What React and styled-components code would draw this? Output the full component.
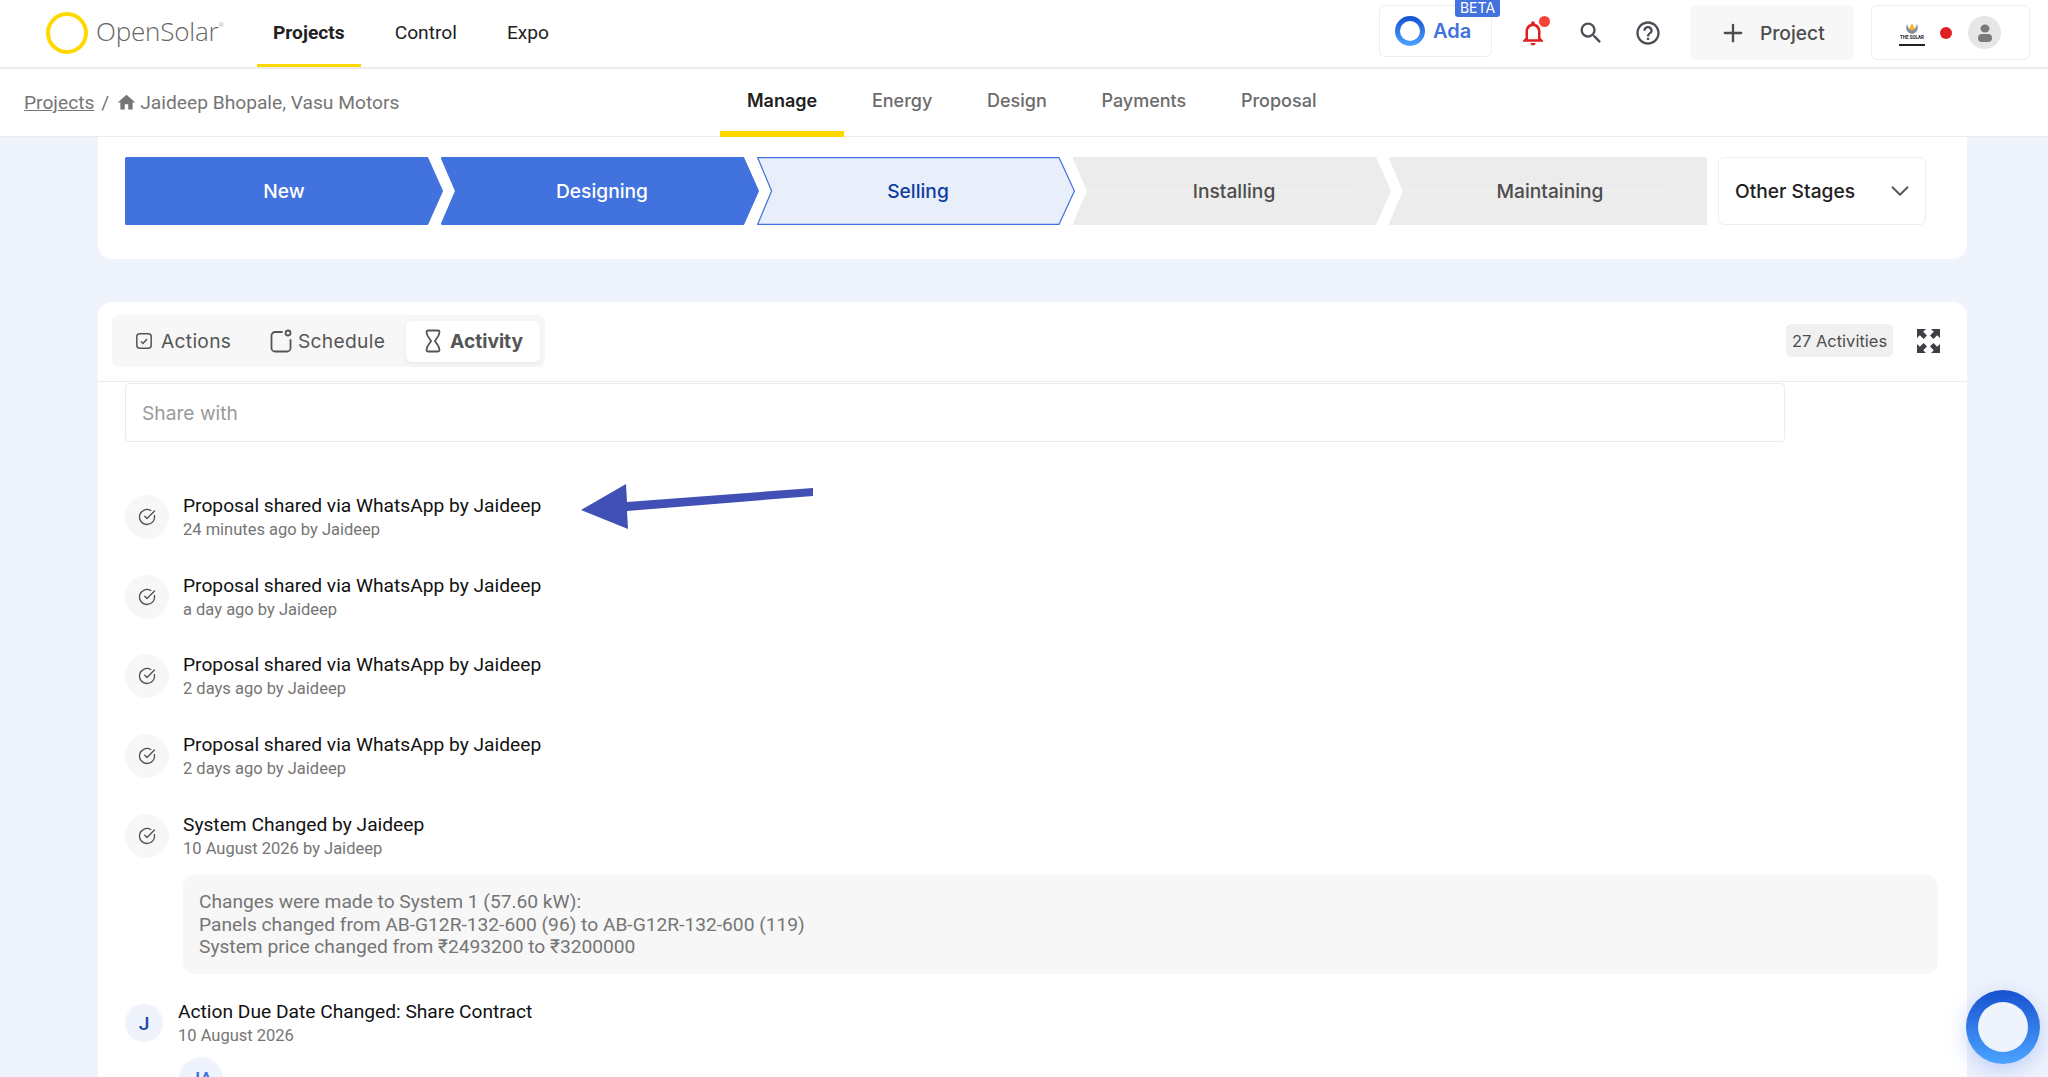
import React from 'react';
import styled, {createGlobalStyle} from 'styled-components';
import {CircleCheckBig, Plus, ChevronDown} from 'lucide-react';
import {MdHome, MdOutlineNotifications, MdOutlineHelpOutline, MdSearch} from 'react-icons/md';

const GlobalStyle = createGlobalStyle`
  html, body {
    margin: 0;
    height: 100%;
    overflow: hidden;
    background: #eff3fc;
    font-family: Roboto, "Liberation Sans", sans-serif;
  }
  * {
    box-sizing: border-box;
  }
`;

const Page = styled.div`
  height: 1077px;
  overflow: hidden;
  display: flex;
  flex-direction: column;
`;

const TopBar = styled.header`
  height: 69px;
  flex: none;
  background: #fff;
  border-bottom: 2px solid #ececec;
  display: flex;
  align-items: flex-start;
  padding-left: 46px;
`;

const Logo = styled.div`
  display: flex;
  align-items: center;
  gap: 8px;
  height: 66px;
  width: 211px;
`;

const LogoRing = styled.div`
  width: 42px;
  height: 42px;
  border-radius: 50%;
  border: 4px solid #ffd800;
`;

const LogoName = styled.span`
  font-family: "Open Sans", sans-serif;
  font-weight: 300;
  font-size: 26px;
  letter-spacing: -0.2px;
  color: #666;
  padding-bottom: 4px;
  sup {
    font-size: 6px;
    vertical-align: 14px;
  }
`;

const MainNav = styled.nav`
  display: flex;
  height: 67px;
`;

const MainLink = styled.a`
  height: 67px;
  padding: 0 ${({$pad}) => $pad}px;
  display: flex;
  align-items: center;
  font-size: 19.2px;
  font-weight: ${({$active}) => ($active ? 700 : 400)};
  color: #212121;
  border-bottom: 3px solid ${({$active}) => ($active ? '#ffd800' : 'transparent')};
`;

const TopRight = styled.div`
  margin-left: auto;
  display: flex;
  align-items: flex-start;
  padding-right: 18px;
`;

const AdaBox = styled.div`
  position: relative;
  width: 113px;
  height: 52px;
  margin-top: 5px;
  border: 1px solid #eeeeee;
  border-radius: 6px;
  display: flex;
  align-items: center;
  gap: 8px;
  padding-left: 15px;
  color: #4272dd;
  font-family: Inter, sans-serif;
  font-weight: 600;
  font-size: 20px;
`;

const AdaRing = styled.div`
  width: 30px;
  height: 30px;
  border-radius: 50%;
  padding: 5px;
  background: linear-gradient(#1751d0, #4ba4ff);
  &::after {
    content: '';
    display: block;
    width: 100%;
    height: 100%;
    border-radius: 50%;
    background: #fff;
  }
`;

const BetaBadge = styled.span`
  position: absolute;
  top: -6px;
  right: -9px;
  width: 45px;
  height: 17px;
  border-radius: 0 0 3px 3px;
  background: #4272dd;
  color: #fff;
  font-weight: 400;
  font-size: 14px;
  line-height: 16px;
  text-align: center;
`;

const IconGroup = styled.div`
  display: flex;
  align-items: center;
  gap: 29px;
  height: 65px;
  width: 198px;
  padding-left: 26px;
  color: #4d4d55;
`;

const BellWrap = styled.div`
  position: relative;
  width: 30px;
  height: 30px;
  color: #e02020;
  svg {
    display: block;
  }
  &::after {
    content: '';
    position: absolute;
    top: -1.5px;
    right: -2px;
    width: 11px;
    height: 11px;
    border-radius: 50%;
    background: #f44336;
  }
`;

const ProjectButton = styled.div`
  width: 164px;
  height: 55px;
  margin-top: 5px;
  border-radius: 6px;
  background: #f7f7f7;
  color: #4d4d4d;
  display: flex;
  align-items: center;
  gap: 13px;
  padding-left: 29px;
  font-family: Inter, sans-serif;
  font-weight: 500;
  font-size: 19.2px;
`;

const OrgBox = styled.div`
  width: 159px;
  height: 55px;
  margin: 5px 0 0 17px;
  border: 1px solid #eeeeee;
  border-radius: 6px;
  display: flex;
  align-items: center;
  padding-left: 27px;
`;

const RedDot = styled.span`
  width: 12px;
  height: 12px;
  border-radius: 50%;
  background: #e02020;
  margin: 0 16px 0 15px;
`;

const Avatar = styled.div`
  width: 33px;
  height: 33px;
  border-radius: 50%;
  background: #e6e6e6;
  display: flex;
  align-items: center;
  justify-content: center;
`;

const SubBar = styled.div`
  height: 68px;
  flex: none;
  background: #fff;
  border-bottom: 1px solid #ececec;
  display: flex;
  align-items: flex-start;
`;

const Breadcrumb = styled.div`
  width: 720px;
  padding: 22px 0 0 24px;
  display: flex;
  align-items: center;
  font-size: 19.2px;
  color: #757575;
  a {
    text-decoration: underline;
  }
  span {
    margin: 0 7px;
  }
  svg {
    margin-right: 3px;
  }
`;

const ProjectTabs = styled.nav`
  display: flex;
  height: 68px;
`;

const ProjectTab = styled.a`
  height: 68px;
  padding: 0 27px;
  margin-right: 0.7px;
  display: flex;
  align-items: center;
  font-family: Inter, sans-serif;
  font-size: 18px;
  font-weight: ${({$active}) => ($active ? 600 : 500)};
  color: ${({$active}) => ($active ? '#212121' : '#6b6b6b')};
  border-bottom: 6px solid ${({$active}) => ($active ? '#ffd800' : 'transparent')};
`;

const Content = styled.main`
  flex: 1;
  min-height: 0;
  padding: 0 81px 0 98px;
  display: flex;
  flex-direction: column;
  gap: 43px;
`;

const StageCard = styled.section`
  flex: none;
  height: 122px;
  background: #fff;
  border-radius: 0 0 14px 14px;
  padding: 20px 27px 0;
  display: flex;
`;

const StageItem = styled.div`
  position: relative;
  flex: 0 0 318px;
  height: 68px;
  margin-left: ${({$first}) => ($first ? 0 : -2)}px;
  padding-left: ${({$first}) => ($first ? 0 : 4)}px;
  display: flex;
  align-items: center;
  justify-content: center;
  font-family: Inter, sans-serif;
  font-size: 19.2px;
  font-weight: 500;
  color: ${({$color}) => $color};
`;

const StageShape = styled.svg`
  position: absolute;
  inset: 0;
`;

const StageLabel = styled.span`
  position: relative;
`;

const OtherStages = styled.div`
  width: 208px;
  height: 68px;
  margin-left: 11px;
  border: 1px solid #eeeeee;
  border-radius: 6px;
  display: flex;
  align-items: center;
  justify-content: space-between;
  padding: 0 10px 0 16px;
  font-family: Inter, sans-serif;
  font-weight: 500;
  font-size: 19.2px;
  color: #212121;
  svg {
    color: #555;
  }
`;

const ActivityCard = styled.section`
  flex: 1;
  min-height: 0;
  background: #fff;
  border-radius: 14px 14px 0 0;
  overflow: hidden;
`;

const CardHeader = styled.div`
  height: 80px;
  border-bottom: 1px solid #ececec;
  padding: 13px 27px 0 14px;
  display: flex;
  align-items: flex-start;
  justify-content: space-between;
`;

const TabGroup = styled.div`
  width: 433px;
  height: 52px;
  background: #f7f7f7;
  border-radius: 6px;
  display: flex;
  align-items: center;
  padding-left: 24px;
`;

const TabButton = styled.div`
  display: flex;
  align-items: center;
  height: 41px;
  gap: ${({$gap}) => $gap}px;
  width: ${({$width}) => $width}px;
  padding-left: ${({$active}) => ($active ? 19 : 0)}px;
  border-radius: 6px;
  background: ${({$active}) => ($active ? '#fff' : 'transparent')};
  box-shadow: ${({$active}) => ($active ? '0 2px 5px rgba(0,0,0,0.06)' : 'none')};
  font-family: Inter, sans-serif;
  font-size: 19.2px;
  font-weight: ${({$active}) => ($active ? 700 : 400)};
  letter-spacing: ${({$active}) => ($active ? 0 : 0.3)}px;
  color: #555;
`;

const HeaderRight = styled.div`
  display: flex;
  align-items: center;
  gap: 24px;
  padding-top: 9px;
`;

const CountBadge = styled.div`
  width: 107px;
  height: 33px;
  border-radius: 5px;
  background: #f0f0f0;
  display: flex;
  align-items: center;
  justify-content: center;
  font-family: Inter, sans-serif;
  font-size: 16.5px;
  color: #4d4d4d;
`;

const ActivityBody = styled.div`
  padding: 1px 29px 0 27px;
`;

const ShareInput = styled.div`
  width: 1660px;
  height: 59px;
  border: 1px solid #ececec;
  border-radius: 4px;
  padding-left: 16px;
  display: flex;
  align-items: center;
  font-family: Inter, sans-serif;
  font-size: 19.2px;
  color: #9a9a9a;
`;

const Feed = styled.div`
  padding-top: 52.5px;
  display: flex;
  flex-direction: column;
  gap: 34.7px;
`;

const FeedRow = styled.div`
  position: relative;
  display: flex;
  align-items: center;
  gap: ${({$gap}) => $gap}px;
  height: 45px;
`;

const RowIcon = styled.div`
  flex: none;
  width: ${({$size}) => $size}px;
  height: ${({$size}) => $size}px;
  border-radius: 50%;
  background: ${({$tint}) => ($tint ? '#eff3fc' : '#f7f7f7')};
  color: ${({$tint}) => ($tint ? '#1a4aa8' : '#4d4d4d')};
  font-weight: 500;
  font-size: 19.2px;
  display: flex;
  align-items: center;
  justify-content: center;
`;

const RowText = styled.div`
  padding-top: 1px;
`;

const RowTitle = styled.div`
  font-size: 19.2px;
  line-height: 24px;
  color: #111;
`;

const RowMeta = styled.div`
  font-size: 16.5px;
  line-height: 23px;
  color: #757575;
`;

const Arrow = styled.svg`
  position: absolute;
  left: 456px;
  top: -16px;
`;

const ChangeBox = styled.div`
  margin: -17.5px 0 -8.5px 58px;
  height: 99px;
  width: 1755px;
  border-radius: 12px;
  background: #f7f7f7;
  padding: 16px 16px 0;
  font-size: 19.2px;
  line-height: 22.5px;
  color: #757575;
`;

const SubAvatar = styled(RowIcon)`
  margin: -23px 0 0 54px;
  color: #4272dd;
  align-items: flex-start;
  padding-top: 10px;
`;

const Fab = styled.div`
  position: fixed;
  left: 1966px;
  top: 990px;
  width: 74px;
  height: 74px;
  border-radius: 50%;
  padding: 12px;
  background: linear-gradient(#1751d0, #4ba4ff);
  box-shadow: 0 6px 22px rgba(60, 110, 230, 0.28);
  &::after {
    content: '';
    display: block;
    width: 100%;
    height: 100%;
    border-radius: 50%;
    background: #eff3fc;
  }
`;

const STAGES = [
  {name: 'New', fill: '#4272dd', stroke: '#4272dd', color: '#fff', weight: 3},
  {name: 'Designing', fill: '#4272dd', stroke: '#4272dd', color: '#fff', weight: 3},
  {name: 'Selling', fill: '#e9eefb', stroke: '#4272dd', color: '#0f3d9e', weight: 1.2},
  {name: 'Installing', fill: '#ececec', stroke: '#ececec', color: '#4d4d4d', weight: 3, rule: true},
  {name: 'Maintaining', fill: '#ececec', stroke: '#ececec', color: '#4d4d4d', weight: 3, rule: true},
];

const PROPOSAL_TIMES = ['24 minutes ago by Jaideep', 'a day ago by Jaideep', '2 days ago by Jaideep', '2 days ago by Jaideep'];

const ActionsIcon = () => (
  <svg width="16" height="16" viewBox="0 0 16 16" fill="none" stroke="#555">
    <rect x="0.8" y="0.8" width="14.4" height="14.4" rx="3" strokeWidth="1.5"/>
    <path d="M5 8.5l2 2 4-4.5" strokeWidth="1.5"/>
  </svg>
);

const ScheduleIcon = () => (
  <svg width="22" height="24" viewBox="0 0 22 24" fill="none" stroke="#555" strokeWidth="1.8">
    <path d="M12 3H5a3.5 3.5 0 0 0-3.5 3.5V19A3.5 3.5 0 0 0 5 22.5h12a3.5 3.5 0 0 0 3.5-3.5V11" strokeLinecap="round"/>
    <circle cx="18" cy="4" r="2.5"/>
  </svg>
);

const HourglassIcon = () => (
  <svg width="16" height="24" viewBox="0 0 16 24" fill="none" stroke="#555" strokeWidth="1.8">
    <path d="M3 1.5h10A1.5 1.5 0 0 1 14.5 3c0 4-3 6-4.5 9 1.5 3 4.5 5 4.5 9a1.5 1.5 0 0 1-1.5 1.5H3A1.5 1.5 0 0 1 1.5 21c0-4 3-6 4.5-9C4.5 9 1.5 7 1.5 3A1.5 1.5 0 0 1 3 1.5z"/>
  </svg>
);

const ExpandIcon = () => (
  <svg width="23" height="24" viewBox="0 0 23 24" fill="#3f3f46">
    <path d="M0 0h9L6.2 2.8 10 6.6 6.6 10 2.8 6.2 0 9z"/>
    <path d="M23 0h-9l2.8 2.8L13 6.6 16.4 10l3.8-3.8L23 9z"/>
    <path d="M0 24h9l-2.8-2.8L10 17.400 6.6 14l-3.8 3.800L0 15z"/>
    <path d="M23 24h-9l2.8-2.800-3.800-3.800L16.400 14l3.800 3.800L23 15z"/>
  </svg>
);

const OrgLogo = () => (
  <svg width="26" height="26" viewBox="0 0 26 26">
    <path d="M10 9l3-6 3 6-3 4z" fill="#f5b82e"/>
    <path d="M8 4c-2 5 0 9 5 10 5-1 7-5 5-10-1 3-2 6-5 6s-4-3-5-6z" fill="#8a8f99"/>
    <text x="13" y="19" textAnchor="middle" fontSize="4.5" fontWeight="700" fill="#222" fontFamily="Roboto">THE SOLAR</text>
    <rect x="0" y="24" width="26" height="2" fill="#222"/>
  </svg>
);

const PersonIcon = () => (
  <svg width="16" height="18" viewBox="0 0 16 18" fill="#7a7a7a">
    <ellipse cx="8" cy="4.5" rx="4.5" ry="4"/>
    <rect x="1" y="10" width="14" height="8" rx="4"/>
  </svg>
);

// first stage has no notch on the left, last one no point on the right
const StagePolygon = ({first, last, stage}) => {
  const a = stage.weight / 2;
  const right = last
    ? `${318 - a},${a} ${318 - a},${68 - a}`
    : `302,${a} ${318 - a},34 302,${68 - a}`;
  const left = first ? '' : `${14 + a},34`;
  return (
    <StageShape width="318" height="68" viewBox="0 0 318 68">
      <polygon
        points={`${a},${a} ${right} ${a},${68 - a} ${left}`}
        fill={stage.fill}
        stroke={stage.stroke}
        strokeWidth={stage.weight}
        strokeLinejoin="round"
      />
      {stage.rule && <line x1="15" y1="33.5" x2="280" y2="33.5" stroke="#f1f1f1"/>}
    </StageShape>
  );
};

const ActivityRow = ({title, meta, children}) => (
  <FeedRow $gap={14}>
    <RowIcon $size={44}><CircleCheckBig size={18} strokeWidth={1.7}/></RowIcon>
    <RowText>
      <RowTitle>{title}</RowTitle>
      <RowMeta>{meta}</RowMeta>
    </RowText>
    {children}
  </FeedRow>
);

const App = () => (
  <Page>
    <GlobalStyle/>
    <TopBar>
      <Logo>
        <LogoRing/>
        <LogoName>OpenSolar<sup>®</sup></LogoName>
      </Logo>
      <MainNav>
        <MainLink $active $pad={16}>Projects</MainLink>
        <MainLink $pad={34}>Control</MainLink>
        <MainLink $pad={16}>Expo</MainLink>
      </MainNav>
      <TopRight>
        <AdaBox>
          <AdaRing/>
          Ada
          <BetaBadge>BETA</BetaBadge>
        </AdaBox>
        <IconGroup>
          <BellWrap><MdOutlineNotifications size={30}/></BellWrap>
          <MdSearch size={28}/>
          <MdOutlineHelpOutline size={28}/>
        </IconGroup>
        <ProjectButton><Plus size={28} strokeWidth={2}/>Project</ProjectButton>
        <OrgBox>
          <OrgLogo/>
          <RedDot/>
          <Avatar><PersonIcon/></Avatar>
        </OrgBox>
      </TopRight>
    </TopBar>
    <SubBar>
      <Breadcrumb>
        <a>Projects</a>
        <span>/</span>
        <MdHome size={21}/>
        Jaideep Bhopale, Vasu Motors
      </Breadcrumb>
      <ProjectTabs>
        <ProjectTab $active>Manage</ProjectTab>
        <ProjectTab>Energy</ProjectTab>
        <ProjectTab>Design</ProjectTab>
        <ProjectTab>Payments</ProjectTab>
        <ProjectTab>Proposal</ProjectTab>
      </ProjectTabs>
    </SubBar>
    <Content>
      <StageCard>
        {STAGES.map((stage, i) => (
          <StageItem key={stage.name} $first={i === 0} $color={stage.color}>
            <StagePolygon first={i === 0} last={i === STAGES.length - 1} stage={stage}/>
            <StageLabel>{stage.name}</StageLabel>
          </StageItem>
        ))}
        <OtherStages>Other Stages<ChevronDown size={30} strokeWidth={1.5}/></OtherStages>
      </StageCard>
      <ActivityCard>
        <CardHeader>
          <TabGroup>
            <TabButton $width={134} $gap={9}><ActionsIcon/>Actions</TabButton>
            <TabButton $width={136} $gap={6}><ScheduleIcon/>Schedule</TabButton>
            <TabButton $active $width={134} $gap={9}><HourglassIcon/>Activity</TabButton>
          </TabGroup>
          <HeaderRight>
            <CountBadge>27 Activities</CountBadge>
            <ExpandIcon/>
          </HeaderRight>
        </CardHeader>
        <ActivityBody>
          <ShareInput>Share with</ShareInput>
          <Feed>
            {PROPOSAL_TIMES.map((meta, i) => (
              <ActivityRow key={i} title="Proposal shared via WhatsApp by Jaideep" meta={meta}>
                {i === 0 && (
                  <Arrow width="234" height="52" viewBox="0 0 234 52">
                    <path d="M0 31L45 5L46 23L232 9L232 17L46 32L47 50Z" fill="#4050b5"/>
                  </Arrow>
                )}
              </ActivityRow>
            ))}
            <ActivityRow title="System Changed by Jaideep" meta="10 August 2026 by Jaideep"/>
            <ChangeBox>
              Changes were made to System 1 (57.60 kW):<br/>
              Panels changed from AB-G12R-132-600 (96) to AB-G12R-132-600 (119)<br/>
              System price changed from ₹2493200 to ₹3200000
            </ChangeBox>
            <FeedRow $gap={15}>
              <RowIcon $size={38} $tint>J</RowIcon>
              <RowText>
                <RowTitle>Action Due Date Changed: Share Contract</RowTitle>
                <RowMeta>10 August 2026</RowMeta>
              </RowText>
            </FeedRow>
            <SubAvatar $size={44} $tint>JA</SubAvatar>
          </Feed>
        </ActivityBody>
      </ActivityCard>
    </Content>
    <Fab/>
  </Page>
);

export default App;
